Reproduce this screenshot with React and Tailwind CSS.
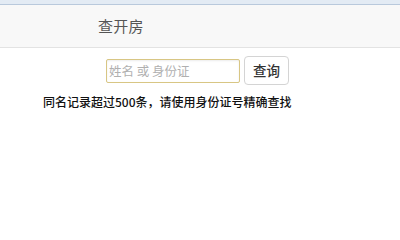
import React from "react";

const App = () => {
  return (
    <div
      className="w-[400px] h-[216px] bg-white overflow-hidden"
      style={{ fontFamily: '"Noto Sans CJK SC", "Liberation Sans", sans-serif' }}
    >
      <div className="h-[5px] bg-[#e3ebf4] border-b border-[#b9c9dc]" />
      <div className="h-[43px] bg-[#f8f8f8] border-b border-[#e3e3e3] flex items-center">
        <span className="ml-[98px] text-[15px] text-[#555] tracking-[0.3px]">查开房</span>
      </div>
      <div className="flex items-center ml-[106px] mt-[8px]">
        <input
          type="text"
          placeholder="姓名 或 身份证"
          className="w-[134px] h-[24px] px-[2px] text-[12.5px] border border-[#d8c684] rounded-[2px] shadow-[inset_0_1px_2px_rgba(0,0,0,0.08)] placeholder:text-[#b0b0b0] outline-none"
        />
        <button className="ml-[4px] w-[45px] h-[29px] bg-white border border-[#d4d4d4] rounded-[4px] text-[13.5px] text-[#333] font-medium">
          查询
        </button>
      </div>
      <p className="ml-[43px] mt-[11px] text-[12px] text-[#111] font-medium leading-none">
        同名记录超过500条，请使用身份证号精确查找
      </p>
    </div>
  );
};

export default App;
